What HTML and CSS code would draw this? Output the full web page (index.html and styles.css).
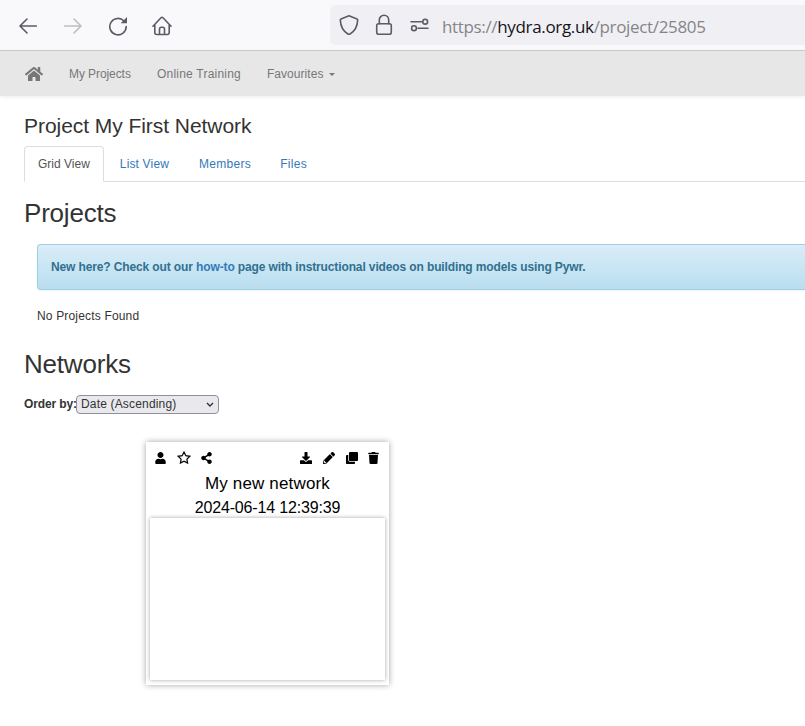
FILE: index.html
```html
<!DOCTYPE html>
<html lang="en">
<head>
<meta charset="utf-8">
<title>Project My First Network</title>
<link rel="stylesheet" href="styles.css">
</head>
<body>
<header class="browser">
  <div class="controls">
    <svg width="18" height="16" viewBox="0 0 18 16"><path d="M17.3 8H1.2M8 1L1 8l7 7"/></svg>
    <svg class="disabled" width="18" height="16" viewBox="0 0 18 16"><path d="M.7 8h16.1M10 1l7 7-7 7"/></svg>
    <svg width="20" height="20" viewBox="0 0 20 20"><path d="M18.200 10.500A8.200 8.200 0 1 1 16 5"/><path class="solid" d="M19 1v6.300h-6.300z"/></svg>
    <svg width="20" height="20" viewBox="0 0 20 20"><path d="M1 10.2L9 1.8q1-1 2 0l8 8.4M2.8 8.800v7.700q0 2 2 2h10.400q2 0 2-2V8.800M7.500 18.300V13q0-1.800 1.800-1.800h1.400q1.800 0 1.800 1.800v5.300"/></svg>
  </div>
  <div class="address">
    <svg width="20" height="22" viewBox="0 0 20 22"><path d="M10 1.8l8 3.1q.7.3.7 1C18.4 12.8 15.6 17.4 11 20q-1 .6-2 0C4.4 17.4 1.6 12.8 1.3 5.9q0-.7.7-1z"/></svg>
    <svg width="18" height="22" viewBox="0 0 18 22"><rect x="1.7" y="9.8" width="14.6" height="10.4" rx="2"/><path d="M4.3 9.800V6a4.700 4.700 0 0 1 9.400 0v3.800"/></svg>
    <svg width="20" height="16" viewBox="0 0 20 16"><path d="M1 4.700h10.500M8 11.200h10"/><circle cx="15.200" cy="4.700" r="2.400"/><circle cx="4" cy="11.200" r="2.400"/></svg>
    <div class="url">https://<b>hydra.org.uk</b>/project/25805</div>
  </div>
</header>
<nav class="navbar">
  <svg width="18" height="16" viewBox="0 0 576 512"><path d="M280.37 148.26L96 300.11V464a16 16 0 0 0 16 16l112.06-.29a16 16 0 0 0 15.92-16V368a16 16 0 0 1 16-16h64a16 16 0 0 1 16 16v95.64a16 16 0 0 0 16 16.05L464 480a16 16 0 0 0 16-16V300L295.67 148.26a12.19 12.19 0 0 0-15.3 0zM571.6 251.47L488 182.56V44.05a12 12 0 0 0-12-12h-56a12 12 0 0 0-12 12v72.61L318.47 43a48 48 0 0 0-61 0L4.34 251.47a12 12 0 0 0-1.6 16.9l25.5 31A12 12 0 0 0 45.15 301l235.22-193.74a12.19 12.19 0 0 1 15.3 0L530.9 301a12 12 0 0 0 16.9-1.6l25.5-31a12 12 0 0 0-1.7-16.93z"/></svg>
  <a class="nav-projects">My Projects</a>
  <a class="nav-training">Online Training</a>
  <a class="nav-fav">Favourites<span class="caret"></span></a>
</nav>
<main>
  <h1>Project My First Network</h1>
  <div class="tabs">
    <a class="tab active">Grid View</a>
    <a class="tab">List View</a>
    <a class="tab">Members</a>
    <a class="tab">Files</a>
  </div>
  <h2>Projects</h2>
  <div class="alert">New here? Check out our <a>how-to</a> page with instructional videos on building models using Pywr.</div>
  <p class="empty">No Projects Found</p>
  <h2 class="networks">Networks</h2>
  <div class="order">
    <label>Order by:</label>
    <div class="select"><span>Date (Ascending)</span><svg width="8" height="6" viewBox="0 0 8 6"><path d="M1 1l3 3 3-3"/></svg></div>
  </div>
  <article class="card">
    <div class="actions">
      <svg class="user" width="11" height="12" viewBox="0 0 448 512"><path d="M224 256c70.7 0 128-57.3 128-128S294.7 0 224 0 96 57.3 96 128s57.3 128 128 128zm89.6 32h-16.7c-22.2 10.2-46.9 16-72.9 16s-50.6-5.8-72.9-16h-16.7C60.2 288 0 348.2 0 422.4V464c0 26.5 21.5 48 48 48h352c26.5 0 48-21.5 48-48v-41.6c0-74.2-60.2-134.4-134.4-134.4z"/></svg>
      <svg class="star" width="14" height="13" viewBox="0 0 14 13"><path d="M7 1.1l1.8 3.6 4 .6-2.9 2.8.7 4L7 10.2l-3.6 1.9.7-4L1.2 5.3l4-.6z"/></svg>
      <svg class="share" width="11" height="12" viewBox="0 0 448 512"><path d="M352 320c-22.608 0-43.387 7.819-59.79 20.895l-102.486-64.054a96.551 96.551 0 0 0 0-41.683l102.486-64.054C308.613 184.181 329.392 192 352 192c53.019 0 96-42.981 96-96S405.019 0 352 0s-96 42.981-96 96c0 7.158.79 14.13 2.276 20.841L155.79 180.895C139.387 167.819 118.608 160 96 160c-53.019 0-96 42.981-96 96s42.981 96 96 96c22.608 0 43.387-7.819 59.79-20.895l102.486 64.054A96.301 96.301 0 0 0 256 416c0 53.019 42.981 96 96 96s96-42.981 96-96-42.981-96-96-96z"/></svg>
      <svg class="download" width="12" height="12" viewBox="0 0 512 512"><path d="M216 0h80c13.300 0 24 10.700 24 24v168h87.700c17.800 0 26.700 21.500 14.100 34.100L269.700 378.300c-7.500 7.500-19.800 7.500-27.300 0L90.100 226.100c-12.600-12.600-3.700-34.100 14.100-34.100H192V24c0-13.300 10.700-24 24-24zm296 376v112c0 13.300-10.700 24-24 24H24c-13.300 0-24-10.700-24-24V376c0-13.300 10.700-24 24-24h146.700l49 49c20.100 20.100 52.500 20.100 72.600 0l49-49H488c13.300 0 24 10.700 24 24z"/></svg>
      <svg class="pencil" width="12" height="12" viewBox="0 0 512 512"><path d="M497.9 142.1l-46.1 46.1c-4.7 4.7-12.3 4.7-17 0l-111-111c-4.7-4.7-4.7-12.3 0-17l46.1-46.1c18.7-18.7 49.1-18.7 67.9 0l60.1 60.1c18.8 18.7 18.8 49.1 0 67.9zM284.2 99.8L21.6 362.4.4 483.9c-2.9 16.4 11.4 30.6 27.8 27.8l121.5-21.3 262.6-262.6c4.7-4.7 4.7-12.3 0-17l-111-111c-4.8-4.7-12.4-4.7-17.1 0zM88 424h48v36.3l-64.5 11.3-31.1-31.1L51.7 376H88v48z" fill-rule="evenodd"/></svg>
      <svg class="clone" width="12" height="12" viewBox="0 0 512 512"><path d="M464 0c26.510 0 48 21.490 48 48v288c0 26.510-21.490 48-48 48H176c-26.510 0-48-21.490-48-48V48c0-26.510 21.490-48 48-48h288M176 416c-44.112 0-80-35.888-80-80V128H48c-26.510 0-48 21.490-48 48v288c0 26.510 21.490 48 48 48h288c26.510 0 48-21.490 48-48v-48H176z"/></svg>
      <svg class="trash" width="11" height="12" viewBox="0 0 448 512"><path d="M432 32H312l-9.400-18.700A24 24 0 0 0 281.100 0H166.800a23.720 23.720 0 0 0-21.400 13.300L136 32H16A16 16 0 0 0 0 48v32a16 16 0 0 0 16 16h416a16 16 0 0 0 16-16V48a16 16 0 0 0-16-16zM53.200 467a48 48 0 0 0 47.900 45h245.800a48 48 0 0 0 47.900-45L416 128H32z"/></svg>
    </div>
    <div class="name">My new network</div>
    <div class="date">2024-06-14 12:39:39</div>
    <div class="preview"></div>
  </article>
</main>
</body>
</html>
```
FILE: styles.css
```css
* { box-sizing: border-box; }
body {
  margin: 0;
  height: 726px;
  overflow: hidden;
  background: #fff;
  color: #333;
  font: 12px/18px "Liberation Sans", Arial, sans-serif;
}
svg { display: block; flex: none; }
.browser {
  display: flex;
  height: 51px;
  padding-top: 5px;
  background: #f9f9fb;
  border-bottom: 1px solid #ccc;
}
.browser svg {
  fill: none;
  stroke: #5b5b66;
  stroke-width: 1.6;
  stroke-linecap: round;
  stroke-linejoin: round;
}
.browser .solid { fill: #5b5b66; stroke: none; }
.browser .disabled { stroke: #bdbdc2; }
.controls {
  display: flex;
  align-items: center;
  width: 330px;
  height: 42px;
  padding-left: 19px;
  gap: 27px;
}
.controls .disabled { margin-right: -1px; }
.controls svg:nth-child(3) { margin-right: -3px; }
.address {
  display: flex;
  align-items: center;
  flex: 1;
  height: 40px;
  padding-left: 9px;
  background: #f0f0f4;
  border-radius: 5px 0 0 5px;
}
.address svg:nth-child(2) { margin-left: 16px; }
.address svg:nth-child(3) { margin-left: 17px; }
.url {
  margin-left: 12px;
  padding-top: 3px;
  font: 17px/24px "Open Sans", sans-serif;
  letter-spacing: -.34px;
  color: #858589;
  white-space: nowrap;
}
.url b { font-weight: 400; color: #15141a; }
.navbar {
  display: flex;
  align-items: center;
  height: 45px;
  padding-left: 25px;
  background: #e7e7e7;
  color: #777;
  box-shadow: 0 1px 4px rgba(0, 0, 0, .08);
}
.navbar svg { fill: #777; }
.nav-projects { margin-left: 26px; width: 88px; letter-spacing: -.08px; }
.nav-training { width: 110px; letter-spacing: .22px; }
.nav-fav { letter-spacing: .04px; }
.caret {
  display: inline-block;
  margin-left: 6px;
  vertical-align: middle;
  border: 3px solid transparent;
  border-top-color: #777;
  border-bottom: 0;
}
main { padding-left: 24px; }
h1, h2 { margin: 0; font-weight: 400; }
h1 { padding-top: 17px; font-size: 21px; line-height: 25px; height: 50px; letter-spacing: -.05px; }
.tabs { display: flex; height: 36px; border-bottom: 1px solid #ddd; }
.tab {
  height: 36px;
  margin-right: 2px;
  padding: 8px 13px;
  border: 1px solid transparent;
  border-radius: 4px 4px 0 0;
  color: #337ab7;
  letter-spacing: .16px;
}
.tab:nth-child(n+3) { letter-spacing: .3px; }
.tab:nth-child(4) { margin-left: -1px; }
.tab.active {
  background: #fff;
  border-color: #ddd;
  border-bottom-color: #fff;
  color: #555;
  letter-spacing: 0;
}
h2 { margin-top: 17px; font-size: 26px; line-height: 28px; letter-spacing: -.2px; }
.alert {
  height: 46px;
  margin: 17px 0 0 13px;
  padding: 13px;
  border: 1px solid #9acfea;
  border-right: 0;
  border-radius: 4px 0 0 4px;
  background: linear-gradient(#d9edf7, #b9def0);
  box-shadow: inset 0 1px 0 rgba(255, 255, 255, .25), 0 1px 2px rgba(0, 0, 0, .05);
  color: #31708f;
  font-weight: 700;
  letter-spacing: -.125px;
}
.alert a { color: #337ab7; }
.empty { margin: 17px 0 0 13px; letter-spacing: .17px; }
h2.networks { margin-top: 25px; }
.order { display: flex; margin-top: 17px; height: 19px; }
.order label { width: 52px; font-weight: 700; white-space: nowrap; letter-spacing: -.12px; }
.select {
  display: flex;
  align-items: center;
  justify-content: space-between;
  width: 143px;
  height: 19px;
  padding: 0 4px;
  border: 1px solid #8f8f9d;
  border-radius: 4px;
  background: #e9e9ed;
  line-height: 17px;
  letter-spacing: .17px;
}
.select svg { fill: none; stroke: #333; stroke-width: 1.4; }
.card {
  width: 243px;
  height: 243px;
  margin: 28px 0 0 122px;
  padding: 9px 4px 0;
  background: #fff;
  color: #000;
  box-shadow: 0 0 6px rgba(0, 0, 0, .36);
  font-size: 16px;
  line-height: 24px;
  text-align: center;
}
.actions { display: flex; align-items: center; height: 13px; margin-bottom: 8px; padding-left: 5px; }
.star { margin-left: 11px; fill: none; stroke: #000; stroke-width: 1.2; }
.share { margin-left: 10px; }
.download { margin-left: 88px; }
.pencil { margin-left: 11px; }
.clone { margin-left: 11px; }
.trash { margin-left: 10px; }
.name { font-size: 17px; letter-spacing: .15px; }
.date { letter-spacing: -.16px; }
.preview { height: 162px; margin-top: -2px; background: #fff; box-shadow: 0 0 4px rgba(0, 0, 0, .36); }
```
